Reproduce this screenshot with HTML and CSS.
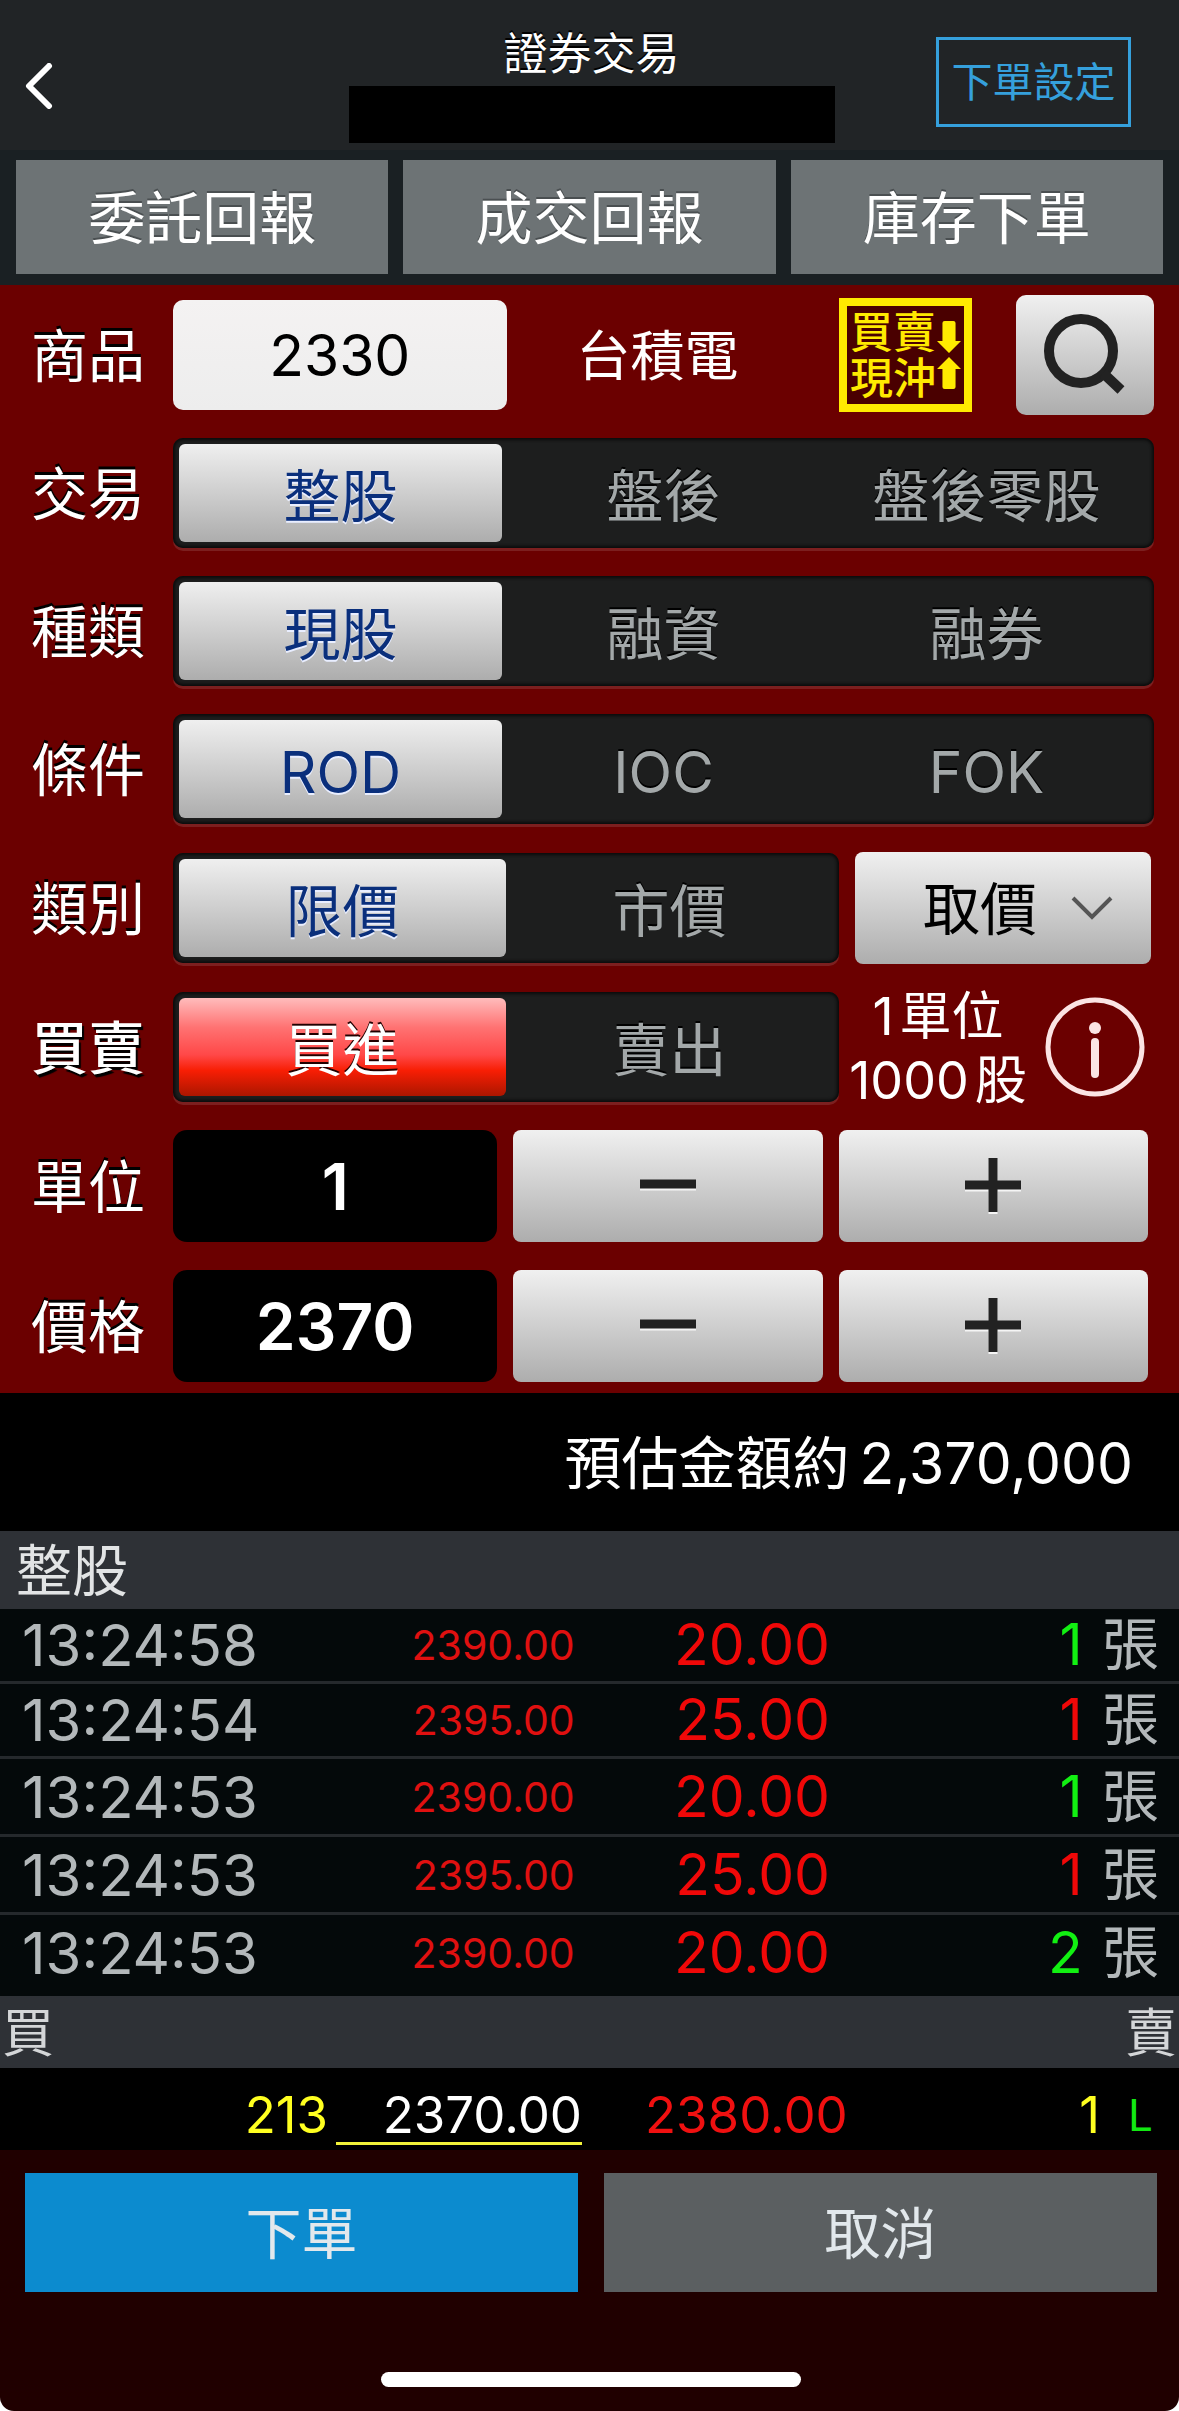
FILE: index.html
```html
<!DOCTYPE html>
<html lang="zh-Hant">
<head>
<meta charset="utf-8">
<meta name="viewport" content="width=device-width, initial-scale=1">
<title>證券交易</title>
<link rel="stylesheet" href="styles.css">
</head>
<body>
<div class="app">
  <header class="topbar">
    <button class="back" type="button" aria-label="返回">
      <svg width="28" height="46" viewBox="0 0 28 46"><path d="M24 3 4 23l20 20" fill="none" stroke="#fff" stroke-width="6" stroke-linecap="round" stroke-linejoin="round"/></svg>
    </button>
    <div class="heading">
      <h1 class="title">證券交易</h1>
      <div class="account"></div>
    </div>
    <button class="settings" type="button">下單設定</button>
  </header>

  <nav class="tabs">
    <a class="tab" href="#orders">委託回報</a>
    <a class="tab" href="#fills">成交回報</a>
    <a class="tab" href="#holdings">庫存下單</a>
  </nav>

  <form class="order" id="order">
    <div class="row">
      <label class="label" for="symbol">商品</label>
      <div class="controls">
        <input class="symbol" id="symbol" type="text" value="2330">
        <span class="stock">台積電</span>
        <span class="badge">
          <span class="badge-text">買賣<br>現沖</span>
          <svg class="badge-arrows" width="24" height="68" viewBox="0 0 22 68" preserveAspectRatio="none"><path d="M5 2q0-2 2-2h8q2 0 2 2v18h5L11 32 0 20h5zM5 66q0 2 2 2h8q2 0 2-2V48h5L11 36 0 48h5z" fill="#ffea00"/></svg>
        </span>
        <button class="search" type="button" aria-label="搜尋">
          <svg width="84" height="84" viewBox="0 0 84 84"><circle cx="38" cy="38" r="32" fill="none" stroke="#222" stroke-width="10"/><path d="m60 60 18 17" stroke="#222" stroke-width="10"/></svg>
        </button>
      </div>
    </div>

    <div class="row">
      <span class="label">交易</span>
      <div class="segment" role="group" aria-label="交易">
        <button class="option selected" type="button" aria-pressed="true">整股</button>
        <button class="option" type="button" aria-pressed="false">盤後</button>
        <button class="option" type="button" aria-pressed="false">盤後零股</button>
      </div>
    </div>

    <div class="row">
      <span class="label">種類</span>
      <div class="segment" role="group" aria-label="種類">
        <button class="option selected" type="button" aria-pressed="true">現股</button>
        <button class="option" type="button" aria-pressed="false">融資</button>
        <button class="option" type="button" aria-pressed="false">融券</button>
      </div>
    </div>

    <div class="row">
      <span class="label">條件</span>
      <div class="segment" role="group" aria-label="條件">
        <button class="option selected" type="button" aria-pressed="true">ROD</button>
        <button class="option" type="button" aria-pressed="false">IOC</button>
        <button class="option" type="button" aria-pressed="false">FOK</button>
      </div>
    </div>

    <div class="row row-tall">
      <span class="label">類別</span>
      <div class="controls">
        <div class="segment" role="group" aria-label="類別">
          <button class="option selected" type="button" aria-pressed="true">限價</button>
          <button class="option" type="button" aria-pressed="false">市價</button>
        </div>
        <div class="picker">
          <select class="picker-select" aria-label="取價"><option>取價</option></select>
          <svg class="picker-arrow" width="44" height="26" viewBox="0 0 44 26"><path d="m3 3 19 19L41 3" fill="none" stroke="#555" stroke-width="4"/></svg>
        </div>
      </div>
    </div>

    <div class="row">
      <span class="label label-strong">買賣</span>
      <div class="controls">
        <div class="segment" role="group" aria-label="買賣">
          <button class="option buy" type="button" aria-pressed="true">買進</button>
          <button class="option" type="button" aria-pressed="false">賣出</button>
        </div>
        <p class="lot"><span>1</span><span class="lot-unit">單位</span><br><span>1000</span><span class="lot-unit">股</span></p>
        <button class="info" type="button" aria-label="說明">
          <svg width="100" height="100" viewBox="0 0 100 100"><circle cx="50" cy="50" r="47" fill="none" stroke="#fbe4e4" stroke-width="5"/><circle cx="50" cy="31" r="6" fill="#fbe4e4"/><path d="M50 45v32" stroke="#fbe4e4" stroke-width="8" stroke-linecap="round"/></svg>
        </button>
      </div>
    </div>

    <div class="row row-tall">
      <label class="label" for="units">單位</label>
      <div class="stepper">
        <input class="amount" id="units" type="text" inputmode="numeric" value="1">
        <button class="step" type="button" aria-label="減少單位"><svg width="56" height="60" viewBox="0 0 56 60"><path d="M0 30h56" stroke="#f5f5f5" stroke-width="9"/><path d="M0 28h56" stroke="#222" stroke-width="9"/></svg></button>
        <button class="step" type="button" aria-label="增加單位"><svg width="56" height="60" viewBox="0 0 56 60"><path d="M0 31h56M28 4v54" stroke="#f5f5f5" stroke-width="9"/><path d="M0 29h56M28 2v54" stroke="#222" stroke-width="9"/></svg></button>
      </div>
    </div>

    <div class="row row-tall">
      <label class="label" for="price">價格</label>
      <div class="stepper">
        <input class="amount" id="price" type="text" inputmode="decimal" value="2370">
        <button class="step" type="button" aria-label="降低價格"><svg width="56" height="60" viewBox="0 0 56 60"><path d="M0 30h56" stroke="#f5f5f5" stroke-width="9"/><path d="M0 28h56" stroke="#222" stroke-width="9"/></svg></button>
        <button class="step" type="button" aria-label="提高價格"><svg width="56" height="60" viewBox="0 0 56 60"><path d="M0 31h56M28 4v54" stroke="#f5f5f5" stroke-width="9"/><path d="M0 29h56M28 2v54" stroke="#222" stroke-width="9"/></svg></button>
      </div>
    </div>
  </form>

  <p class="estimate"><span>預估金額約</span><span>2,370,000</span></p>

  <h2 class="section">整股</h2>
  <table class="trades">
    <tbody>
      <tr class="recent"><td class="time">13:24:58</td><td class="deal">2390.00</td><td class="change">20.00</td><td class="volume down">1</td><td class="unit">張</td></tr>
      <tr class="recent"><td class="time">13:24:54</td><td class="deal">2395.00</td><td class="change">25.00</td><td class="volume up">1</td><td class="unit">張</td></tr>
      <tr><td class="time">13:24:53</td><td class="deal">2390.00</td><td class="change">20.00</td><td class="volume down">1</td><td class="unit">張</td></tr>
      <tr><td class="time">13:24:53</td><td class="deal">2395.00</td><td class="change">25.00</td><td class="volume up">1</td><td class="unit">張</td></tr>
      <tr><td class="time">13:24:53</td><td class="deal">2390.00</td><td class="change">20.00</td><td class="volume down">2</td><td class="unit">張</td></tr>
    </tbody>
  </table>

  <div class="sides"><span>買</span><span>賣</span></div>
  <div class="quote">
    <span class="bid-size">213</span>
    <span class="bid">2370.00</span>
    <span class="ask">2380.00</span>
    <span class="ask-size">1</span>
    <span class="mark">L</span>
  </div>

  <footer class="actions">
    <div class="buttons">
      <button class="action submit" type="submit" form="order">下單</button>
      <button class="action cancel" type="reset" form="order">取消</button>
    </div>
    <div class="home"></div>
  </footer>
</div>
</body>
</html>
```
FILE: styles.css
```css
* {
  box-sizing: border-box;
}

body {
  margin: 0;
  background: #fff;
  font-family: Inter, "Noto Sans CJK TC", sans-serif;
  font-size: 57px;
  line-height: 64px;
  color: #fff;
}

button,
input,
select {
  margin: 0;
  padding: 0;
  border: 0;
  border-radius: 0;
  background: none;
  color: inherit;
  font: inherit;
}

h1,
h2,
p {
  margin: 0;
  font-weight: 400;
}

svg {
  display: block;
}

.app {
  min-height: 100vh;
  display: flex;
  flex-direction: column;
  overflow: hidden;
  border-radius: 0 0 14px 14px;
  background: #200000;
}

/* Header */
.topbar {
  display: grid;
  grid-template-columns: 1fr 486px 1fr;
  align-items: center;
  height: 150px;
  padding: 14px 48px 0 52px;
  background: #212426;
}

.back {
  justify-self: start;
  padding-top: 8px;
  margin-left: -27px;
}

.heading {
  display: flex;
  flex-direction: column;
  gap: 6px;
  padding-top: 6px;
}

.title {
  font-size: 44px;
  line-height: 52px;
  text-align: center;
  text-shadow: 0 -2px 0 #000;
}

.account {
  height: 57px;
  background: #000;
}

.settings {
  justify-self: end;
  width: 195px;
  height: 90px;
  border: 3px solid #35a0dc;
  color: #35a0dc;
  font-size: 41px;
}

.tabs {
  display: grid;
  grid-template-columns: repeat(3, 1fr);
  gap: 15px;
  padding: 10px 16px 11px;
  background: #1a2023;
}

.tab {
  display: flex;
  align-items: center;
  justify-content: center;
  height: 114px;
  padding-top: 3px;
  background: #6d7375;
  color: #fff;
  text-decoration: none;
  text-shadow: 0 -2px 0 #4a4f51;
}

/* Order form */
.order {
  display: flex;
  flex-direction: column;
  gap: 28px;
  padding: 15px 25px 11px 31px;
  background: #6b0000;
}

.row {
  display: grid;
  grid-template-columns: 142px 1fr;
  grid-template-rows: 100%;
  align-items: center;
  height: 110px;
}

.row-tall {
  height: 112px;
}

.label {
  padding-top: 4px;
  text-shadow: 0 -3px 0 #000;
}

.label-strong {
  font-weight: 500;
  text-shadow: 2px 3px 1px #000;
}

.controls {
  display: flex;
  align-items: center;
}

.symbol {
  width: 34%;
  height: 110px;
  border-radius: 10px;
  background: linear-gradient(#f4f2f2, #ededed);
  color: #000;
  text-align: center;
}

.stock {
  flex: 1;
  padding: 4px 0 0 70px;
  font-size: 54px;
}

.badge {
  display: flex;
  align-items: center;
  gap: 1px;
  width: 133px;
  height: 114px;
  padding-left: 3px;
  margin-right: 44px;
  border: 8px solid #ffea00;
  background: #4a0000;
  color: #ffea00;
}

.badge-text {
  font-size: 43px;
  font-weight: 500;
  line-height: 46px;
}

.search {
  display: grid;
  place-items: center;
  width: 138px;
  height: 120px;
  border-radius: 10px;
  background: linear-gradient(#f0f0f0, #adadad);
}

.segment {
  display: flex;
  flex: 1;
  height: 110px;
  padding: 6px;
  border-radius: 10px;
  background: #1d1e1e;
  box-shadow: inset 0 0 3px 2px #0b0b0b, 0 3px 0 #7c1f1f;
}

.option {
  flex: 1 1 0;
  padding-top: 7px;
  border-radius: 6px;
  color: #a3a8a9;
  text-shadow: 0 -2px 0 #000;
}

.selected {
  background: linear-gradient(#efefef, #adadad);
  color: #0a2f7c;
  text-shadow: 0 2px 0 #e9eeff;
}

.buy {
  background: linear-gradient(#ffbcbc, #ff7272 30%, #ff4848 58%, #f81e04 74%, #ab1600);
  color: #fff;
  text-shadow: 0 -2px 0 #200;
}

.picker {
  display: grid;
  align-items: center;
  width: 296px;
  margin: 0 3px 0 16px;
  border-radius: 8px;
  background: linear-gradient(#f0f0f0, #adadad);
}

.picker-select {
  grid-area: 1 / 1;
  appearance: none;
  width: 100%;
  height: 112px;
  padding: 3px 0 0 68px;
  color: #000;
}

.picker-arrow {
  grid-area: 1 / 1;
  justify-self: end;
  margin-right: 37px;
  pointer-events: none;
}

.lot {
  width: 182px;
  padding-top: 3px;
  margin: 0 16px 0 8px;
  font-size: 52px;
  text-align: center;
  white-space: nowrap;
}

.lot-unit {
  margin-left: 6px;
}

.info {
  margin-right: 9px;
}

.stepper {
  display: grid;
  grid-template-columns: 324fr 309fr 309fr;
  gap: 16px;
  padding-right: 6px;
}

.amount {
  width: 100%;
  height: 112px;
  border-radius: 14px;
  background: #000;
  font-size: 64px;
  font-weight: 600;
  text-align: center;
}

.step {
  display: grid;
  place-items: center;
  height: 112px;
  border-radius: 8px;
  background: linear-gradient(#f0f0f0, #adadad);
}

/* Estimated total */
.estimate {
  display: flex;
  align-items: center;
  justify-content: flex-end;
  gap: 10px;
  height: 138px;
  padding: 3px 46px 0 0;
  background: #000;
}

/* Trade ticks */
.section {
  height: 78px;
  padding: 8px 16px;
  background: #2e3136;
  color: #e2e4e5;
  font-size: 56px;
}

.trades {
  width: 100%;
  table-layout: fixed;
  border-collapse: separate;
  border-spacing: 0;
  background: #04090a;
}

.trades td {
  height: 78px;
  padding: 0;
  border-bottom: 3px solid #25292c;
  text-align: right;
  white-space: nowrap;
}

.trades .recent td {
  height: 75px;
}

.trades tr:last-child td {
  height: 81px;
  border-bottom: 6px solid #04090a;
}

.trades .time {
  width: 24%;
  padding-left: 22px;
  color: #b3b8ba;
  font-size: 58px;
  text-align: left;
}

.trades .deal {
  width: 25%;
  padding-right: 3px;
  color: #e01010;
  font-size: 41px;
}

.trades .change {
  width: 22%;
  padding-right: 7px;
  color: #f00808;
}

.trades .volume {
  width: 21%;
  padding-right: 2px;
}

.trades .unit {
  padding-right: 20px;
  color: #b3b8ba;
}

.up {
  color: #f00808;
}

.down {
  color: #12f012;
}

/* Best bid and ask */
.sides {
  display: flex;
  justify-content: space-between;
  height: 72px;
  padding: 6px 2px;
  background: #2e3136;
  color: #d4d6d8;
  font-size: 52px;
}

.quote {
  display: grid;
  grid-template-columns: 336fr 246fr 320fr 198fr 79fr;
  align-items: start;
  height: 82px;
  padding-top: 20px;
  background: #000;
  font-size: 51px;
  line-height: 54px;
}

.bid-size,
.ask-size {
  color: #ffff20;
  text-align: right;
}

.bid-size {
  padding-right: 8px;
}

.bid {
  border-bottom: 3px solid #f2f23a;
  text-align: right;
}

.ask {
  padding-left: 63px;
  color: #f01010;
}

.mark {
  padding-left: 28px;
  color: #12e812;
  font-size: 44px;
}

/* Bottom actions */
.actions {
  display: flex;
  flex-direction: column;
  align-items: center;
  gap: 80px;
  padding: 23px 22px 24px 25px;
}

.buttons {
  display: grid;
  grid-template-columns: 1fr 1fr;
  gap: 26px;
  width: 100%;
}

.action {
  height: 119px;
  padding-top: 3px;
  color: #e2e8ec;
  font-size: 56px;
}

.submit {
  background: #0c8bcf;
}

.cancel {
  background: #5b5f61;
}

.home {
  width: 420px;
  height: 15px;
  border-radius: 8px;
  background: #fff;
}
```
